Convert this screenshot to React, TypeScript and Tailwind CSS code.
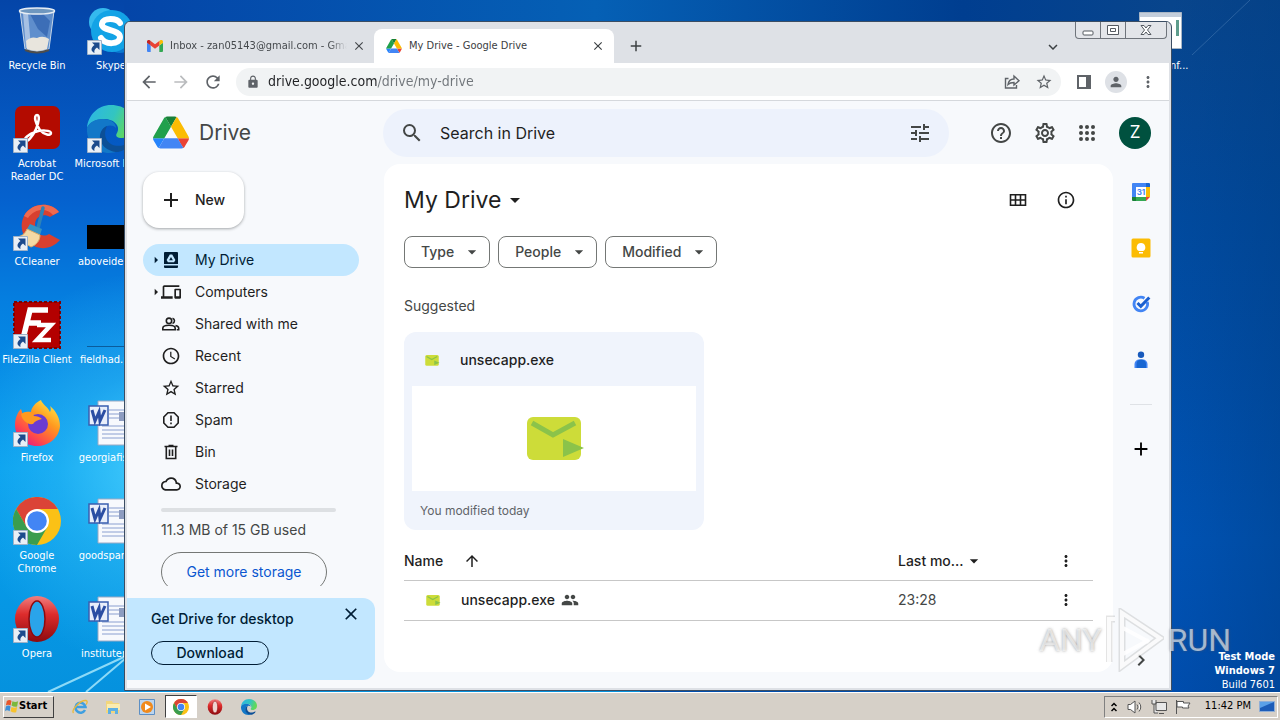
import type { ReactNode } from 'react'
import clsx from 'clsx'
import {
  MdAccessTime, MdAdd, MdArrowBack, MdArrowDropDown, MdArrowForward, MdArrowRight, MdArrowUpward, MdChevronRight,
  MdClose, MdCloudQueue, MdDevices, MdExpandMore, MdHelpOutline, MdInfoOutline, MdLock, MdMoreVert, MdOutlineSettings,
  MdPeople, MdPerson, MdRefresh, MdSearch, MdStarBorder, MdTune,
} from 'react-icons/md'

function DriveLogo({ className }: { className?: string }) {
  return (
    <svg viewBox="0 0 87.3 78" className={className} aria-hidden="true">
      <path fill="#2684fc" d="m6.6 66.85 3.85 6.65c.8 1.4 1.95 2.5 3.3 3.3l13.75-23.8h-27.5c0 1.55.4 3.1 1.2 4.5z" />
      <path fill="#21a04c" d="m43.65 25-13.75-23.8c-1.35.8-2.5 1.9-3.3 3.3l-25.4 44a9.06 9.06 0 0 0 -1.2 4.5h27.5z" />
      <path fill="#ea4335" d="m73.55 76.8c1.35-.8 2.5-1.9 3.3-3.3l1.6-2.75 7.65-13.25c.8-1.4 1.2-2.95 1.2-4.5h-27.502l5.852 11.5z" />
      <path fill="#188038" d="m43.65 25 13.75-23.8c-1.35-.8-2.9-1.2-4.5-1.2h-18.5c-1.6 0-3.15.45-4.5 1.2z" />
      <path fill="#4285f4" d="m59.8 53h-32.3l-13.75 23.8c1.35.8 2.9 1.2 4.5 1.2h50.8c1.6 0 3.15-.45 4.5-1.2z" />
      <path fill="#fbbc04" d="m73.4 26.5-12.7-22c-.8-1.4-1.95-2.5-3.3-3.3l-13.75 23.8 16.15 28h27.45c0-1.55-.4-3.1-1.2-4.5z" />
    </svg>
  )
}

function GmailLogo() {
  return (
    <svg viewBox="0 0 16 12" className="h-3 w-4 shrink-0" aria-hidden="true">
      <path fill="#4285f4" d="M1 12h2.7V5.5L0 2.7V11a1 1 0 0 0 1 1z" />
      <path fill="#34a853" d="M12.3 12H15a1 1 0 0 0 1-1V2.7l-3.7 2.8z" />
      <path fill="#fbbc04" d="M12.3 1v4.5L16 2.7V1.6C16 .2 14.400-.5 13.300.3z" />
      <path fill="#ea4335" d="M3.700 5.500V1L8 4.200 12.300 1v4.500L8 8.700z" />
      <path fill="#c5221f" d="M0 1.600v1.100l3.700 2.800V1L2.700.3C1.600-.5 0 .2 0 1.600z" />
    </svg>
  )
}

function ChromeLogo({ className }: { className?: string }) {
  return (
    <svg viewBox="0 0 48 48" className={className} aria-hidden="true">
      <circle cx="24" cy="24" r="24" fill="#fbc116" />
      <path fill="#db4437" d="M3.200 12A24 24 0 0 1 44.800 12H24L13.600 30z" />
      <path fill="#3a9d4f" d="M3.200 12A24 24 0 0 0 24 48L34.400 30H13.600z" />
      <circle cx="24" cy="24" r="12" fill="#fff" />
      <circle cx="24" cy="24" r="9.800" fill="#4285f4" />
    </svg>
  )
}

function OperaLogo({ className, hole }: { className?: string; hole: string }) {
  return (
    <svg viewBox="0 0 48 48" className={className} aria-hidden="true">
      <defs>
        <linearGradient id="opera" x1="0" y1="0" x2="0" y2="1">
          <stop offset="0" stopColor="#f08080" />
          <stop offset=".4" stopColor="#dd2c2c" />
          <stop offset="1" stopColor="#8c0a0f" />
        </linearGradient>
      </defs>
      <ellipse cx="24" cy="24" rx="22" ry="23" fill="url(#opera)" />
      <ellipse cx="24" cy="24" rx="8" ry="18" fill={hole} stroke="#8c0a0f" strokeWidth="1.500" />
    </svg>
  )
}

function EdgeLogo({ className }: { className?: string }) {
  return (
    <svg viewBox="0 0 48 48" className={className} aria-hidden="true">
      <defs>
        <linearGradient id="edge-top" x1="0" y1="0" x2="1" y2="0.300">
          <stop offset="0" stopColor="#2bb5e8" />
          <stop offset=".6" stopColor="#33c5c0" />
          <stop offset="1" stopColor="#63d957" />
        </linearGradient>
      </defs>
      <path fill="url(#edge-top)" d="M0 23C1 10 11 0 24 0c14 0 24 9 24 20 0 8-6 13-13 13-5 0-7-2-5-5 4-7-3-14-13-14C8 14 2 18 0 23z" />
      <path fill="#1278c8" d="M0 23c2-6 9-9 16-9 8 0 13 4 13 9-5-5-14-2-15 6-1 9 7 17 18 17-18 7-33-6-32-23z" />
      <path fill="#0c4f97" d="M20 21c-6 12 3 23 17 19 3-1 6-3 7-2-3 5-8 8-13 9-11 0-19-8-18-17 1-5 4-8 7-9z" />
    </svg>
  )
}

function RecycleBin() {
  return (
    <svg viewBox="0 0 48 48" className="size-12" aria-hidden="true">
      <path fill="#b9d3ec" fillOpacity=".5" stroke="#c7d6e6" d="M7 4h34l-5 38q-12 5-24 0z" />
      <path fill="#fff" fillOpacity=".45" d="M10 6h5l3 34-5 1z" />
      <path fill="#2459a8" fillOpacity=".6" d="M17 7l12-1 8 8-3 16-9-8z" />
      <path fill="#e8e5dd" d="M13 34q5-5 11-3 6-3 12 1l-2 10q-10 4-20 0z" />
      <ellipse cx="24" cy="4" rx="17.500" ry="3" fill="#6f97bf" stroke="#e6edf4" strokeWidth="1.500" />
      <path fill="none" stroke="#4d4d4d" strokeWidth="2" d="M12 43q12 5 24 0" />
    </svg>
  )
}

function SkypeLogo() {
  return (
    <svg viewBox="0 0 48 48" className="size-12" aria-hidden="true">
      <circle cx="16" cy="15" r="14" fill="#35b9ee" />
      <circle cx="33" cy="33" r="13" fill="#0a78d0" />
      <circle cx="25" cy="24" r="21" fill="#13a3e6" />
      <path fill="none" stroke="#fff" strokeWidth="6" strokeLinecap="round" d="M33 16c-3-5-17-6-18 1s18 5 18 13-15 8-19 1" />
    </svg>
  )
}

function AcrobatLogo() {
  return (
    <svg viewBox="0 0 48 48" className="size-12" aria-hidden="true">
      <rect x="2" y="1" width="45" height="43" rx="7" fill="#b30b00" />
      <path fill="none" stroke="#fff" strokeWidth="2.500" strokeLinejoin="round" d="M24 10c-4 0-1 10 3 15s11 6 11 3-10-3-16-1-12 7-10 9 8-5 11-12 4-14 1-14z" />
    </svg>
  )
}

function CCleanerLogo() {
  return (
    <svg viewBox="0 0 48 48" className="size-12" aria-hidden="true">
      <path fill="#d8402f" d="M46 9C37-2 18 0 11 13c-6 12 0 26 12 31 9 3 18 0 24-7l-11-6c-6 4-14 0-14-9s9-12 15-8z" />
      <path fill="#ee6a50" d="M46 9C37-2 18 0 11 13l4 2C22 5 34 5 40 12z" />
      <path stroke="#2e82b8" strokeWidth="3.500" strokeLinecap="round" d="M30 5L25 25" />
      <path fill="#3793c4" d="M17 21l12 5-2 6-13-6z" />
      <path fill="#f3d9a4" stroke="#d3ad6c" d="M14 26l13 6c0 6-4 10-9 12L2 34c6 0 10-3 12-8z" />
    </svg>
  )
}

function FileZillaLogo() {
  return (
    <svg viewBox="0 0 48 48" className="size-12" aria-hidden="true">
      <rect x="1" y="1" width="46" height="46" fill="#b30000" stroke="#7d0000" strokeWidth="2" strokeDasharray="3 2" />
      <path fill="none" stroke="#fff" strokeWidth="5.500" d="M35 9H17L10 38M14 22h14" />
      <path fill="none" stroke="#fff" strokeWidth="4.500" d="M24 24h14L24 39h14" />
    </svg>
  )
}

function FirefoxLogo() {
  return (
    <svg viewBox="0 0 48 48" className="size-12" aria-hidden="true">
      <defs>
        <linearGradient id="fox" x1=".9" y1="0" x2=".2" y2="1">
          <stop offset="0" stopColor="#fff14a" />
          <stop offset=".4" stopColor="#ff9a1f" />
          <stop offset=".75" stopColor="#ff4a4a" />
          <stop offset="1" stopColor="#e31587" />
        </linearGradient>
      </defs>
      <path fill="url(#fox)" d="M28 1c1 4 7 7 9 12 1-2 1-4 0-6 6 5 10 12 10 20C46 39 36 47 24 47S2 38 2 26c0-6 2-12 6-16l2 6c2-3 5-4 8-3 0-4 5-10 10-12z" />
      <circle cx="25" cy="25" r="10" fill="#6b3bd1" />
      <path fill="#ff9a1f" d="M8 15c6-4 11-2 13 2 3 0 6 1 8 3-4 1-7 2-9 5-6 1-11-4-12-10z" />
    </svg>
  )
}

function WordFile() {
  return (
    <svg viewBox="0 0 48 48" className="size-12" aria-hidden="true">
      <path fill="#f7f9fd" stroke="#9aa9c4" d="M11 2h34v44H11z" />
      <path stroke="#8a9fd0" d="M22 11h20M22 15h20M22 19h20M15 27h28M15 31h28M15 35h28M15 39h28" />
      <path fill="#8d9cc0" d="M32 13h11v9H32z" />
      <path fill="#e9effb" stroke="#3a5fb0" strokeWidth="1.500" d="M2 7h19v19H2z" />
      <path fill="none" stroke="#2b4ea3" strokeWidth="3" d="M5 11l3 11 4-9 1 9 5-11" />
    </svg>
  )
}

function ShortcutBadge() {
  return (
    <svg viewBox="0 0 15 15" className="absolute bottom-0 left-0 size-[15px]" aria-hidden="true">
      <path fill="#e9eff6" stroke="#9fb2c8" d="M.5.5h14v14H.5z" />
      <path fill="#1c4a8c" d="M5 2.500h7.500V10L10 7.500c-2.500 1.500-3 3-2.500 5.500C3.500 11 3.500 8 7.500 5z" />
    </svg>
  )
}

function MailExe({ className }: { className?: string }) {
  return (
    <svg viewBox="0 0 58 44" className={className} aria-hidden="true">
      <rect width="54" height="43" rx="6" fill="#cddc39" />
      <path fill="none" stroke="#8bc34a" strokeWidth="5" d="M5 6l21 12L48 6" />
      <path fill="#8bc34a" d="M36 22l21 9-21 9z" />
    </svg>
  )
}

type Shortcut = { label: string; icon: ReactNode; linked?: boolean }

const firstColumn: Shortcut[] = [
  { label: 'Recycle Bin', icon: <RecycleBin /> },
  { label: 'Acrobat Reader DC', icon: <AcrobatLogo />, linked: true },
  { label: 'CCleaner', icon: <CCleanerLogo />, linked: true },
  { label: 'FileZilla Client', icon: <FileZillaLogo />, linked: true },
  { label: 'Firefox', icon: <FirefoxLogo />, linked: true },
  { label: 'Google Chrome', icon: <ChromeLogo className="size-12" />, linked: true },
  { label: 'Opera', icon: <OperaLogo className="size-12" hole="#2aa4ea" />, linked: true },
]

const secondColumn: Shortcut[] = [
  { label: 'Skype', icon: <SkypeLogo />, linked: true },
  { label: 'Microsoft Edge', icon: <EdgeLogo className="size-12" />, linked: true },
  { label: 'aboveideas...', icon: <div className="mt-[22px] h-6 w-12 bg-black" /> },
  { label: 'fieldhad.png', icon: <div className="mt-[45px] h-px w-12 bg-[#0a5c9c]" /> },
  { label: 'georgiafish...', icon: <WordFile /> },
  { label: 'goodsparts...', icon: <WordFile /> },
  { label: 'institutem...', icon: <WordFile /> },
]

function DesktopIcon({ label, icon, linked }: Shortcut) {
  const wraps = label === 'Google Chrome' || label.startsWith('Acrobat')
  return (
    <li className="flex h-[98px] w-[74px] flex-col items-center">
      <div className="relative flow-root size-12 shrink-0">
        {icon}
        {linked && <ShortcutBadge />}
      </div>
      <span className={clsx('mt-1 text-center text-[11px] leading-[13px] text-white', !wraps && 'whitespace-nowrap')}>{label}</span>
    </li>
  )
}

function Wallpaper() {
  return (
    <svg className="absolute inset-0 size-full" viewBox="0 0 1280 720" preserveAspectRatio="none" aria-hidden="true">
      <defs>
        <linearGradient id="left-sky" x1="0" y1="0" x2="0" y2="1">
          <stop offset="0" stopColor="#0445a8" />
          <stop offset=".28" stopColor="#0562cf" />
          <stop offset=".42" stopColor="#057fe0" />
          <stop offset=".65" stopColor="#079fee" />
          <stop offset="1" stopColor="#0590dc" />
        </linearGradient>
        <linearGradient id="right-sky" x1="0" y1="0" x2="0" y2="1">
          <stop offset="0" stopColor="#08458c" />
          <stop offset=".3" stopColor="#014a9e" />
          <stop offset=".75" stopColor="#0053b4" />
          <stop offset="1" stopColor="#004cac" />
        </linearGradient>
        <linearGradient id="right-shade" x1="0" y1="0" x2="1" y2="0">
          <stop offset="0" stopColor="#003c80" stopOpacity="0" />
          <stop offset="1" stopColor="#003c80" stopOpacity=".4" />
        </linearGradient>
        <linearGradient id="top-sky" x1="0" y1="0" x2="1" y2="0">
          <stop offset="0" stopColor="#0445a8" />
          <stop offset=".45" stopColor="#0560b5" />
          <stop offset=".8" stopColor="#003e90" />
          <stop offset="1" stopColor="#08458c" />
        </linearGradient>
        <radialGradient id="glow" cx="160" cy="470" r="200" gradientUnits="userSpaceOnUse">
          <stop offset="0" stopColor="#4fd4ff" stopOpacity=".85" />
          <stop offset=".5" stopColor="#4fd4ff" stopOpacity=".3" />
          <stop offset="1" stopColor="#4fd4ff" stopOpacity="0" />
        </radialGradient>
      </defs>
      <rect width="640" height="720" fill="url(#left-sky)" />
      <rect x="640" width="640" height="720" fill="url(#right-sky)" />
      <rect x="1172" width="108" height="720" fill="url(#right-shade)" />
      <rect x="124" width="1048" height="24" fill="url(#top-sky)" />
      <rect width="640" height="720" fill="url(#glow)" />
      <path stroke="#b9f2ff" strokeOpacity=".75" strokeWidth="2" d="M48 692L126 656M86 692L126 658" />
      <path stroke="#5f8fc0" strokeOpacity=".4" d="M1192 55L1250 0" />
    </svg>
  )
}

function CaptionButtons() {
  return (
    <div className="flex h-[17px] rounded-b-sm border border-t-0 border-[#6f747b] bg-[#e3e5e9]">
      <button aria-label="Minimize" className="flex w-[25px] items-center justify-center border-r border-[#6f747b]">
        <svg viewBox="0 0 12 12" className="size-3"><rect x="1" y="7" width="10" height="4" rx="1" fill="#fff" stroke="#555a61" /></svg>
      </button>
      <button aria-label="Restore" className="flex w-[25px] items-center justify-center border-r border-[#6f747b]">
        <svg viewBox="0 0 12 12" className="size-3"><path fill="#fff" stroke="#555a61" d="M.5 1.500h11v9H.5zM3.500 4.500h5v3h-5z" /></svg>
      </button>
      <button aria-label="Close window" className="flex w-10 items-center justify-center">
        <svg viewBox="0 0 12 12" className="size-3"><path fill="#fff" stroke="#555a61" d="M1 1.500h3l2 2.500 2-2.500h3L7.500 6l3.500 4.500H8L6 8l-2 2.500H1L4.500 6z" /></svg>
      </button>
    </div>
  )
}

function TabStrip() {
  return (
    <div className="flex h-[41px] items-start bg-[#dee1e6]">
      <div role="tablist" className="flex h-full items-end pl-[7px]">
        <div role="tab" className="flex h-[34px] w-[240px] items-center pr-[7px] pl-[13px] text-[11px] text-[#45494d]">
          <GmailLogo />
          <span className="ml-[7px] flex-1 overflow-hidden mask-r-from-90% whitespace-nowrap">Inbox - zan05143@gmail.com - Gmail</span>
          <button aria-label="Close Inbox tab" className="ml-1 flex size-4 items-center justify-center"><MdClose size={14} /></button>
        </div>
        <div role="tab" aria-selected="true" className="flex h-[34px] w-[240px] items-center rounded-t-lg bg-white pr-2 pl-3 text-[11px] text-[#3c4043]">
          <DriveLogo className="h-[14px] w-4 shrink-0" />
          <span className="ml-[7px] flex-1 whitespace-nowrap">My Drive - Google Drive</span>
          <button aria-label="Close My Drive tab" className="flex size-4 items-center justify-center"><MdClose size={14} /></button>
        </div>
        <button aria-label="New tab" className="ml-2.5 flex h-[34px] w-6 items-center justify-center text-[#3c4043]"><MdAdd size={18} /></button>
      </div>
      <button aria-label="Search tabs" className="mt-4 ml-auto text-[#3c4043]"><MdExpandMore size={18} /></button>
      <div className="mr-0.5 ml-[13px]"><CaptionButtons /></div>
    </div>
  )
}

function Toolbar() {
  return (
    <div className="flex h-[38px] items-center border-b border-[#d5d8dc] bg-white px-3 text-[#5f6368]">
      <button aria-label="Back" className="w-5"><MdArrowBack size={20} /></button>
      <button aria-label="Forward" className="ml-3 w-5 text-[#babcbe]"><MdArrowForward size={20} /></button>
      <button aria-label="Reload" className="ml-3 w-5"><MdRefresh size={20} /></button>
      <div className="ml-[13px] flex h-7 flex-1 items-center rounded-full bg-[#f1f3f4] px-2">
        <MdLock size={14} className="ml-0.5 shrink-0" />
        {/* the host part of the address is darker than the path */}
        <input
          aria-label="Address"
          defaultValue="drive.google.com/drive/my-drive"
          className="ml-2 min-w-0 flex-1 bg-[linear-gradient(90deg,#202124_109px,#70757a_109px)] bg-clip-text text-[14px] text-transparent outline-none"
        />
        <button aria-label="Share this page">
          <svg viewBox="0 0 18 18" className="size-[18px]" fill="none" stroke="currentColor" strokeWidth="1.400">
            <path d="M5.500 5.500H2.500v9.500h11v-3M5 11.500c.5-3.500 2.500-5.500 6-5.500V3l5 4.700-5 4.300V9.500c-3 0-4.500.5-6 2z" />
          </svg>
        </button>
        <button aria-label="Bookmark this tab" className="ml-3.5"><MdStarBorder size={18} /></button>
      </div>
      <button aria-label="Side panel" className="ml-4">
        <svg viewBox="0 0 14 14" className="size-3.5"><path fill="currentColor" fillRule="evenodd" d="M0 0h14v14H0zM2 2v10h7V2z" /></svg>
      </button>
      <button aria-label="Profile" className="ml-3.5 flex size-[22px] items-center justify-center rounded-full bg-[#dee1e6]"><MdPerson size={16} /></button>
      <button aria-label="Browser menu" className="ml-3"><MdMoreVert size={18} /></button>
    </div>
  )
}

function DriveHeader() {
  return (
    <header className="flex h-[63px] shrink-0 items-center">
      <a href="#drive" className="flex w-64 shrink-0 items-center gap-2.5 pl-[26px] text-[21px] text-[#444746]">
        <DriveLogo className="h-[33px] w-9" />
        Drive
      </a>
      <form role="search" className="flex h-12 max-w-[566px] flex-1 items-center rounded-full bg-[#edf2fc] px-[17px] text-[#444746]">
        <button type="button" aria-label="Search"><MdSearch size={24} /></button>
        <input aria-label="Search in Drive" placeholder="Search in Drive" className="ml-4 min-w-0 flex-1 text-[16px] text-[#1f1f1f] outline-none placeholder:text-[#1f1f1f]" />
        <button type="button" aria-label="Advanced search"><MdTune size={24} /></button>
      </form>
      <div className="ml-auto flex items-center pr-[18px] text-[#444746]">
        <button aria-label="Support"><MdHelpOutline size={24} /></button>
        <button aria-label="Settings" className="ml-5"><MdOutlineSettings size={24} /></button>
        <button aria-label="Google apps" className="ml-[18px]">
          <svg viewBox="0 0 24 24" className="size-6" fill="currentColor">
            {[6, 12, 18].map(y => [6, 12, 18].map(x => <circle key={`${x}-${y}`} cx={x} cy={y} r="2" />))}
          </svg>
        </button>
        <button aria-label="Account" className="ml-5 size-8 rounded-full bg-[#00513f] text-[17px] text-white">Z</button>
      </div>
    </header>
  )
}

const places = [
  { label: 'My Drive', arrow: true, icon: (
    <svg viewBox="0 0 20 20" className="size-5"><path fill="currentColor" fillRule="evenodd" d="M4 2h12q1 0 1 1v11H3V3q0-1 1-1zm4.800 2.500L5.600 10l1.300 2.200h6.200l1.300-2.200-3.200-5.500zM10 7l1.900 3.200H8.100zM3 15.500h14V17q0 1-1 1H4q-1 0-1-1z" /></svg>
  ) },
  { label: 'Computers', arrow: true, icon: <MdDevices size={20} /> },
  { label: 'Shared with me', icon: (
    <svg viewBox="0 0 20 20" className="size-5" fill="none" stroke="currentColor" strokeWidth="1.600">
      <circle cx="8" cy="6.800" r="2.700" />
      <path d="M1.800 15.700v-1.500c0-1.800 3-2.900 6.200-2.900s6.200 1.100 6.200 2.900v1.500zM11.500 4.200a2.700 2.700 0 0 1 0 5.200M14.500 11.500c2 .5 3.200 1.400 3.200 2.700v1.500h-2" />
    </svg>
  ) },
  { label: 'Recent', icon: <MdAccessTime size={20} /> },
  { label: 'Starred', icon: <MdStarBorder size={20} /> },
  { label: 'Spam', icon: (
    <svg viewBox="0 0 20 20" className="size-5"><path fill="none" stroke="currentColor" strokeWidth="1.600" d="M7 2.800h6L17.200 7v6L13 17.200H7L2.800 13V7z" /><path fill="currentColor" d="M9.200 5.500h1.600v5.500H9.200zM9.200 12.500h1.600v1.700H9.200z" /></svg>
  ) },
  { label: 'Bin', icon: (
    <svg viewBox="0 0 20 20" className="size-5"><path fill="none" stroke="currentColor" strokeWidth="1.600" d="M3.500 4.500h13M7.500 3.500h5M5.300 4.500v12h9.400v-12M8.500 7.500v6.500M11.500 7.500v6.500" /></svg>
  ) },
  { label: 'Storage', icon: <MdCloudQueue size={20} /> },
]

function Sidebar() {
  return (
    <aside className="flex w-[257px] shrink-0 flex-col">
      <div className="min-h-0 flex-1 overflow-hidden px-4 pt-2">
        <button className="flex h-14 w-[101px] items-center gap-3 rounded-2xl bg-white pl-4 text-sm font-medium text-[#1f1f1f] shadow-[0_1px_3px_rgba(60,64,67,0.45)]">
          <MdAdd size={24} />
          New
        </button>
        <nav className="mt-4 w-[216px]">
          {places.map((place, i) => (
            <a
              key={place.label}
              href={`#${place.label}`}
              className={clsx('flex h-8 items-center rounded-full pl-2 text-sm', i === 0 ? 'bg-[#c2e7ff] text-[#001d35]' : 'text-[#1f1f1f]')}
            >
              <span className="flex w-2.5 justify-center">{place.arrow && <MdArrowRight size={16} className="shrink-0" />}</span>
              {place.icon}
              <span className="ml-3.5">{place.label}</span>
            </a>
          ))}
        </nav>
        <div className="pt-2 pl-[18px] text-sm text-[#444746]">
          <div className="h-1 w-[175px] rounded-full bg-[#dde0e3]" />
          <p className="mt-2">11.3 MB of 15 GB used</p>
          <button className="mt-3 h-10 w-[166px] rounded-full border border-[#747775] text-[#0b57d0]">Get more storage</button>
        </div>
      </div>
      <div className="mt-3 mr-[9px] mb-2 flex h-[82px] justify-between rounded-r-xl bg-[#c2e7ff] pr-3.5 pl-6 text-sm text-[#001d35]">
        <div className="pt-[11px]">
          <p className="font-medium">Get Drive for desktop</p>
          <button className="mt-3 h-6 w-[118px] rounded-full border border-[#001d35] font-medium">Download</button>
        </div>
        <button aria-label="Dismiss" className="mt-1.5 h-5"><MdClose size={20} /></button>
      </div>
    </aside>
  )
}

function Chip({ label }: { label: string }) {
  return (
    <button aria-haspopup="menu" className="flex h-8 items-center gap-2 rounded-lg border border-[#747775] pr-[7px] pl-4 text-sm font-medium text-[#444746]">
      {label}
      <MdArrowDropDown size={20} />
    </button>
  )
}

function FileTable() {
  return (
    <table className="mt-3 w-full table-fixed text-left text-sm text-[#1f1f1f]">
      <colgroup>
        <col />
        <col className="w-[141px]" />
        <col className="w-[54px]" />
      </colgroup>
      <thead>
        <tr className="h-[38px] border-b border-[#c7c7c7]">
          <th className="p-0 font-medium">
            <button className="flex items-center gap-5">Name <MdArrowUpward size={18} /></button>
          </th>
          <th className="p-0 font-medium">
            <button className="flex items-center">Last mo... <MdArrowDropDown size={20} /></button>
          </th>
          <th className="p-0"><button aria-label="More options" className="flex w-full justify-center"><MdMoreVert size={18} /></button></th>
        </tr>
      </thead>
      <tbody>
        <tr className="h-10 border-b border-[#c7c7c7]">
          <td className="p-0">
            <div className="flex items-center pl-[22px] font-medium">
              <MailExe className="h-[11px] w-[15px]" />
              <span className="ml-5">unsecapp.exe</span>
              <MdPeople size={18} className="ml-1.5 text-[#444746]" />
            </div>
          </td>
          <td className="p-0 text-[#444746]">23:28</td>
          <td className="p-0"><button aria-label="File actions" className="flex w-full justify-center"><MdMoreVert size={18} /></button></td>
        </tr>
      </tbody>
    </table>
  )
}

function MainPanel() {
  return (
    <main className="mb-4 min-w-0 flex-1 rounded-2xl bg-white px-5 pt-4">
      <div className="flex h-10 items-center justify-between">
        <button className="flex items-center gap-0.5 text-[23px] text-[#1f1f1f]">My Drive <MdArrowDropDown size={24} /></button>
        <div className="flex items-center gap-7 pr-[17px] text-[#1f1f1f]">
          <button aria-label="Grid layout">
            <svg viewBox="0 0 20 20" className="size-5"><path fill="none" stroke="currentColor" strokeWidth="1.600" d="M2.500 4.800h15v10.400h-15zM2.500 10h15M7.500 4.800v10.400M12.500 4.800v10.400" /></svg>
          </button>
          <button aria-label="View details"><MdInfoOutline size={20} /></button>
        </div>
      </div>
      <div className="mt-4 flex gap-2">
        <Chip label="Type" />
        <Chip label="People" />
        <Chip label="Modified" />
      </div>
      <h2 className="mt-7 text-sm text-[#444746]">Suggested</h2>
      <article className="mt-4 w-[300px] rounded-xl bg-[#f0f4fc] px-2">
        <div className="flex h-[54px] items-center gap-5 pt-0.5 pl-3 text-sm font-medium text-[#1f1f1f]">
          <MailExe className="ml-px h-[11px] w-[15px]" />
          unsecapp.exe
        </div>
        <div className="flex h-[105px] items-center justify-center bg-white pl-1"><MailExe className="h-11 w-[58px]" /></div>
        <p className="flex h-[39px] items-center pl-2 text-xs text-[#5f6368]">You modified today</p>
      </article>
      <FileTable />
    </main>
  )
}

function CompanionBar() {
  return (
    <aside className="flex w-14 shrink-0 flex-col items-center">
      <button aria-label="Calendar" className="h-14">
        <svg viewBox="0 0 20 20" className="size-5">
          <path fill="#4285f4" d="M2 1h13v4H5v10H1V2q0-1 1-1z" />
          <path fill="#1967d2" d="M15 1h3q1 0 1 1v3h-4z" />
          <path fill="#fbbc04" d="M15 5h4v10h-4z" />
          <path fill="#34a853" d="M5 15h10v4H5z" />
          <path fill="#188038" d="M1 15h4v4H2q-1 0-1-1z" />
          <path fill="#ea4335" d="M15 15h4l-4 4z" />
          <path fill="#fff" d="M5 5h10v10H5z" />
          <text x="10" y="13" textAnchor="middle" fontSize="8" fontWeight="700" fill="#4285f4">31</text>
        </svg>
      </button>
      <button aria-label="Keep" className="h-14">
        <svg viewBox="0 0 20 20" className="size-5">
          <rect x=".5" y=".5" width="19" height="19" rx="1.500" fill="#fbbc04" />
          <path fill="#fff" d="M10 5a4.300 4.300 0 0 0-2.200 8h4.400A4.300 4.300 0 0 0 10 5zM8 14h4v1.500H8z" />
        </svg>
      </button>
      <button aria-label="Tasks" className="h-14">
        <svg viewBox="0 0 20 20" className="size-5" fill="none">
          <path stroke="#4285f4" strokeWidth="2.800" d="M13.500 4.300A6.800 6.800 0 1 0 16.300 8" />
          <path stroke="#1a5fd0" strokeWidth="3" d="M6.500 9l3.300 3.300L18.300 3.500" />
        </svg>
      </button>
      <button aria-label="Contacts" className="h-14">
        <svg viewBox="0 0 20 20" className="size-5">
          <circle cx="10" cy="4.800" r="3.200" fill="#185abc" />
          <path fill="#4285f4" d="M3.500 18v-3.500C3.500 11 6 9.500 8 9.500h4c2 0 4.500 1.500 4.500 5V18z" />
          <path fill="#1967d2" d="M5.500 18v-4c0-3 2-4.500 4.500-4.500s5 1.500 5 4.500v4z" />
        </svg>
      </button>
      <hr className="mt-4 w-[22px] border-[#dfe2e6]" />
      <button aria-label="Get add-ons" className="mt-4 h-14 text-black"><MdAdd size={22} /></button>
      <button aria-label="Hide side panel" className="mt-auto mb-4 text-[#444746]"><MdChevronRight size={24} /></button>
    </aside>
  )
}

function BrowserWindow() {
  return (
    <section aria-label="Google Chrome" className="absolute top-[21px] right-[108px] bottom-[29px] left-[124px] flex flex-col overflow-hidden rounded-t-md border border-[#3b4d63] bg-[#dee1e6] px-0.5 pb-0.5">
      <TabStrip />
      <Toolbar />
      <div className="flex min-h-0 flex-1 flex-col bg-[#f7f9fc] font-['Inter',sans-serif]">
        <DriveHeader />
        <div className="flex min-h-0 flex-1">
          <Sidebar />
          <MainPanel />
          <CompanionBar />
        </div>
      </div>
    </section>
  )
}

function Watermark() {
  return (
    <div className="pointer-events-none absolute right-[49px] bottom-12 flex items-center gap-1 font-['Roboto',sans-serif] text-[32px] leading-none text-white/60 [text-shadow:0_0_3px_rgba(90,90,90,0.6)]">
      <span>ANY</span>
      <svg viewBox="0 0 58 64" className="h-16 w-[58px]" fill="none" stroke="#fff" strokeOpacity=".85" strokeWidth="4">
        <path stroke="#777" strokeOpacity=".2" strokeWidth="7" d="M16 5l38 25-38 28zM3 54V11h6" />
        <path d="M16 5l38 25-38 28zM3 54V11h6M17 20l26 14M17 46l26-14" />
      </svg>
      <span>RUN</span>
    </div>
  )
}

function Taskbar() {
  return (
    <footer className="relative flex h-7 items-center border-t border-white bg-[#d6d0c8] pr-0.5 pl-[3px] text-black">
      <button className="flex h-[22px] w-[51px] items-center border border-t-white border-r-[#404040] border-b-[#404040] border-l-white text-[11px] font-bold">
        <svg viewBox="0 0 16 16" className="size-[15px] shrink-0">
          <path fill="#e8562a" d="M3 2q3-2 5 0L7 7Q4 5 2 7z" />
          <path fill="#7cb83e" d="M9 2.500q3 1.500 6 0L14 8q-3 1-6-1z" />
          <path fill="#3b8fd8" d="M2 8q3-2 5 0l-1 5q-3-2-5 0z" />
          <path fill="#f7c22d" d="M8 8.500q3 1.500 6 0L13 14q-3 1-6-1z" />
        </svg>
        Start
      </button>
      <nav aria-label="Quick launch" className="ml-[18px] flex items-center">
        <button aria-label="Internet Explorer">
          <svg viewBox="0 0 16 16" className="size-4" fill="none"><path stroke="#3f9fe0" strokeWidth="2.500" d="M13 11a5 5 0 1 1 .5-3H4" /><path stroke="#e9b93a" strokeWidth="1.300" d="M1.500 14C-1 11 8 1 14 1.500c2 .5 1 3 0 4" /></svg>
        </button>
        <button aria-label="Explorer" className="ml-[17px]">
          <svg viewBox="0 0 16 16" className="size-4"><path fill="#f2d67c" d="M1 2h6l1 2h6v10H1z" /><path fill="#fbecb0" d="M2 5h13v6H2z" /><path fill="#5fb0e3" d="M3 15V9h10v6h-3v-3H6v3z" /></svg>
        </button>
        <button aria-label="Media Player" className="ml-[18px]">
          <svg viewBox="0 0 16 16" className="size-4"><path fill="#bcd5ee" stroke="#5d8fc4" d="M.5.5h15v15H.5z" /><circle cx="8" cy="8" r="6" fill="#f08a1c" /><path fill="#fff" d="M6 4.500l6 3.500-6 3.500z" /></svg>
        </button>
        <button aria-label="Chrome" className="ml-2.5 flex h-[23px] w-8 items-center justify-center border border-t-[#404040] border-r-white border-b-white border-l-[#404040] bg-white">
          <ChromeLogo className="size-4" />
        </button>
        <button aria-label="Opera" className="ml-2.5"><OperaLogo className="size-4" hole="#f0d5d0" /></button>
        <button aria-label="Edge" className="ml-[18px]"><EdgeLogo className="size-4" /></button>
      </nav>
      <div className="ml-auto flex h-[22px] items-center border border-t-[#808080] border-r-white border-b-white border-l-[#808080] pr-0.5 pl-1.5 text-[11px]">
        <button aria-label="Show hidden icons">
          <svg viewBox="0 0 6 10" className="h-2.5 w-1.5" fill="none" stroke="#000" strokeWidth="1.500"><path d="M.5 4L3 1.500 5.500 4M.5 9L3 6.500 5.500 9" /></svg>
        </button>
        <svg viewBox="0 0 16 16" className="ml-2.5 size-4" fill="#fff" stroke="#555"><path d="M1 5.500h2.500L8 2v12l-4.500-3.500H1zM10 5.500q2 2.500 0 5M12 3.500q3.500 4.500 0 9" /></svg>
        <svg viewBox="0 0 16 16" className="ml-2 size-4" fill="#e8e8e8" stroke="#555"><path d="M5 3.500h10.500v8H5zM8 14.500h5M1 1v4h4V1M3 5v9h4" /></svg>
        <svg viewBox="0 0 16 16" className="ml-2 size-4" fill="#fff" stroke="#555"><path d="M1.500 1v14M2 2.500h6.500v1.500H15l-2 3 1 2H7.500V8H2z" /></svg>
        <time className="ml-3.5 whitespace-nowrap">11:42 PM</time>
        <svg viewBox="0 0 16 14" className="ml-2 h-3.5 w-4"><path fill="#1c5cb8" stroke="#8faed6" d="M.5 1.500h15v10H.5z" /><path fill="#5aa0e8" d="M1 2h14L1 8z" /></svg>
      </div>
    </footer>
  )
}

export default function App() {
  return (
    <div className="relative flex h-screen flex-col overflow-hidden font-['DejaVu_Sans_Condensed','DejaVu_Sans',sans-serif]">
      <Wallpaper />
      <div className="relative flex min-h-0 flex-1 justify-between pt-[7px]">
        <div className="flex">
          <ul>{firstColumn.map(item => <DesktopIcon key={item.label} {...item} />)}</ul>
          <ul>{secondColumn.map(item => <DesktopIcon key={item.label} {...item} />)}</ul>
        </div>
        <ul className="mr-[83px]">
          <DesktopIcon
            label="systeminf..."
            icon={
              <svg viewBox="0 0 48 48" className="size-12"><path fill="#fff" stroke="#aab7c6" d="M3.500 5.500h42v36h-42z" /><path fill="#c4cedb" d="M4 6h41v4H4z" /><path fill="#5d9c8c" d="M40 13h3v16h-3z" /></svg>
            }
          />
        </ul>
      </div>
      <p className="absolute right-[5px] bottom-7 text-right text-[11px] leading-[14px] text-white">
        <b>Test Mode<br />Windows 7</b><br />Build 7601
      </p>
      <BrowserWindow />
      <Watermark />
      <Taskbar />
    </div>
  )
}
